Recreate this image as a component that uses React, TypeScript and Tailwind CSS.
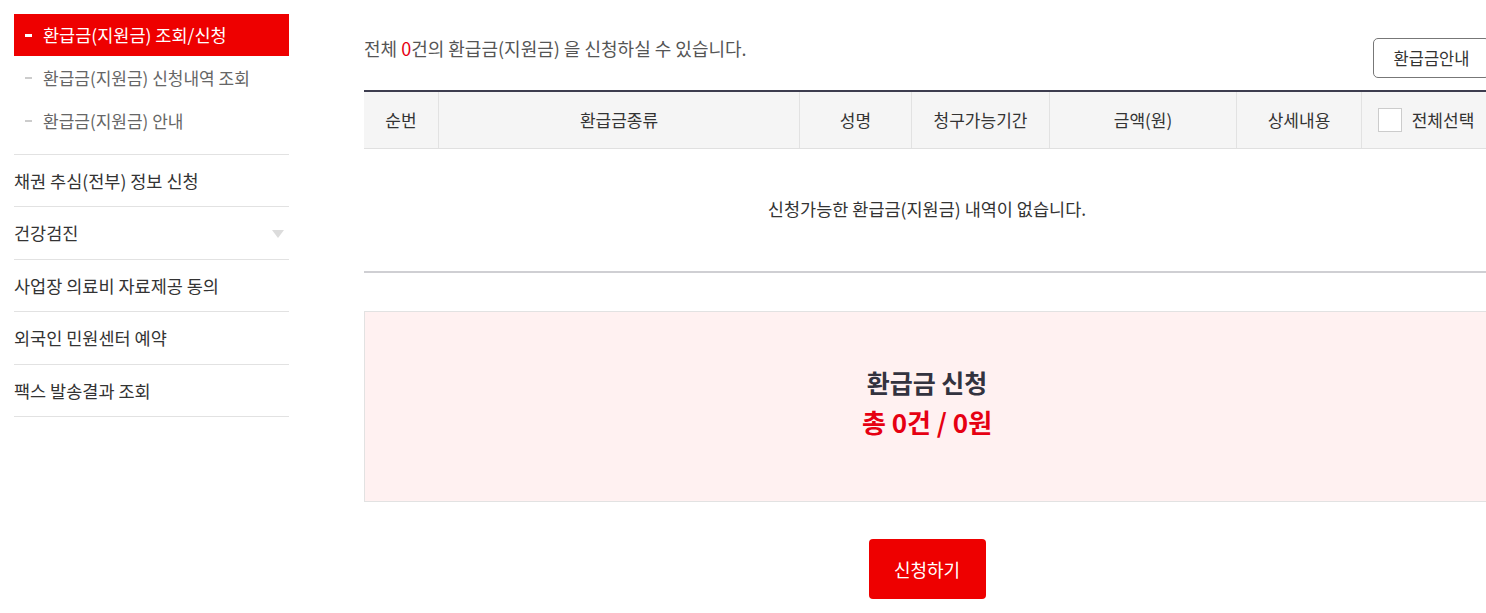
const font = { fontFamily: '"Noto Sans CJK KR", "Noto Sans", sans-serif' };

const subMenus = ['환급금(지원금) 신청내역 조회', '환급금(지원금) 안내'];

const mainMenus = [
  { label: '채권 추심(전부) 정보 신청' },
  { label: '건강검진', arrow: true },
  { label: '사업장 의료비 자료제공 동의' },
  { label: '외국인 민원센터 예약' },
  { label: '팩스 발송결과 조회' },
];

const Sidebar = () => (
  <aside className="w-[275px] shrink-0">
    <ul className="pb-[12px]">
      <li className="flex h-[42px] items-center bg-[#ee0000] pl-[11px] text-[17.5px] text-white">
        <span className="mr-[11px] inline-block h-[3px] w-[7px] bg-white" />
        환급금(지원금) 조회/신청
      </li>
      {subMenus.map((m) => (
        <li key={m} className="flex h-[43px] items-center pl-[11px] text-[17px] text-[#666]">
          <span className="mr-[11px] inline-block h-[2px] w-[7px] bg-[#ccc]" />
          {m}
        </li>
      ))}
    </ul>
    <ul className="border-t border-[#e2e2e2]">
      {mainMenus.map((m) => (
        <li
          key={m.label}
          className="flex h-[52.4px] items-center justify-between border-b border-[#e2e2e2] pt-[1px] text-[17.5px] text-[#333]"
        >
          {m.label}
          {m.arrow && (
            <svg width="14" height="10" viewBox="0 0 14 10" className="mr-[4px]">
              <path d="M1 1h12L7 9z" fill="#dcdcdc" />
            </svg>
          )}
        </li>
      ))}
    </ul>
  </aside>
);

const cols = [
  { label: '순번', w: 'w-[75px]' },
  { label: '환급금종류', w: 'w-[361px]' },
  { label: '성명', w: 'w-[112px]' },
  { label: '청구가능기간', w: 'w-[138px]' },
  { label: '금액(원)', w: 'w-[187px]' },
  { label: '상세내용', w: 'w-[125px]' },
];

export default function App() {
  return (
    <div className="h-[613px] w-[1486px] overflow-hidden bg-white" style={font}>
      <div className="flex pl-[14px] pt-[14px]">
        <Sidebar />
        <main className="ml-[75px] w-[1126px] shrink-0">
          <div className="flex h-[76px] items-start justify-between">
            <p className="mt-[21px] text-[18px] text-[#555]">
              전체 <span className="text-[#e60012]">0</span>건의 환급금(지원금) 을 신청하실 수 있습니다.
            </p>
            <button className="mt-[24px] h-[40px] w-[117px] rounded-[5px] border border-[#777] text-[16.5px] text-[#333]">
              환급금안내
            </button>
          </div>
          <div className="border-t-2 border-[#3d3d4f]">
            <div className="flex h-[57px] border-b border-[#e0e0e0] bg-[#f5f5f5] text-[17px] text-[#333]">
              {cols.map((c) => (
                <div key={c.label} className={`${c.w} flex items-center justify-center border-r border-[#e2e2e2]`}>
                  {c.label}
                </div>
              ))}
              <div className="flex flex-1 items-center justify-center gap-[10px]">
                <span className="h-[24px] w-[24px] border border-[#ccc] bg-white" />
                전체선택
              </div>
            </div>
            <div className="flex h-[124px] items-center justify-center border-b-2 border-[#cfcfd3] pb-[2px] text-[17.5px] text-[#333]">
              신청가능한 환급금(지원금) 내역이 없습니다.
            </div>
          </div>
          <section className="mt-[38px] flex h-[191px] flex-col items-center justify-center border border-[#e2e2e2] bg-[#fff1f1] pb-[10px]">
            <h2 className="text-[25px] font-bold leading-[39px] text-[#33333f]">환급금 신청</h2>
            <p className="text-[26px] font-bold leading-[39px] text-[#e60012]">총 0건 / 0원</p>
          </section>
          <div className="mt-[37px] flex justify-center">
            <button className="h-[60px] w-[117px] rounded-[4px] bg-[#ee0000] text-[18px] text-white">신청하기</button>
          </div>
        </main>
      </div>
    </div>
  );
}
